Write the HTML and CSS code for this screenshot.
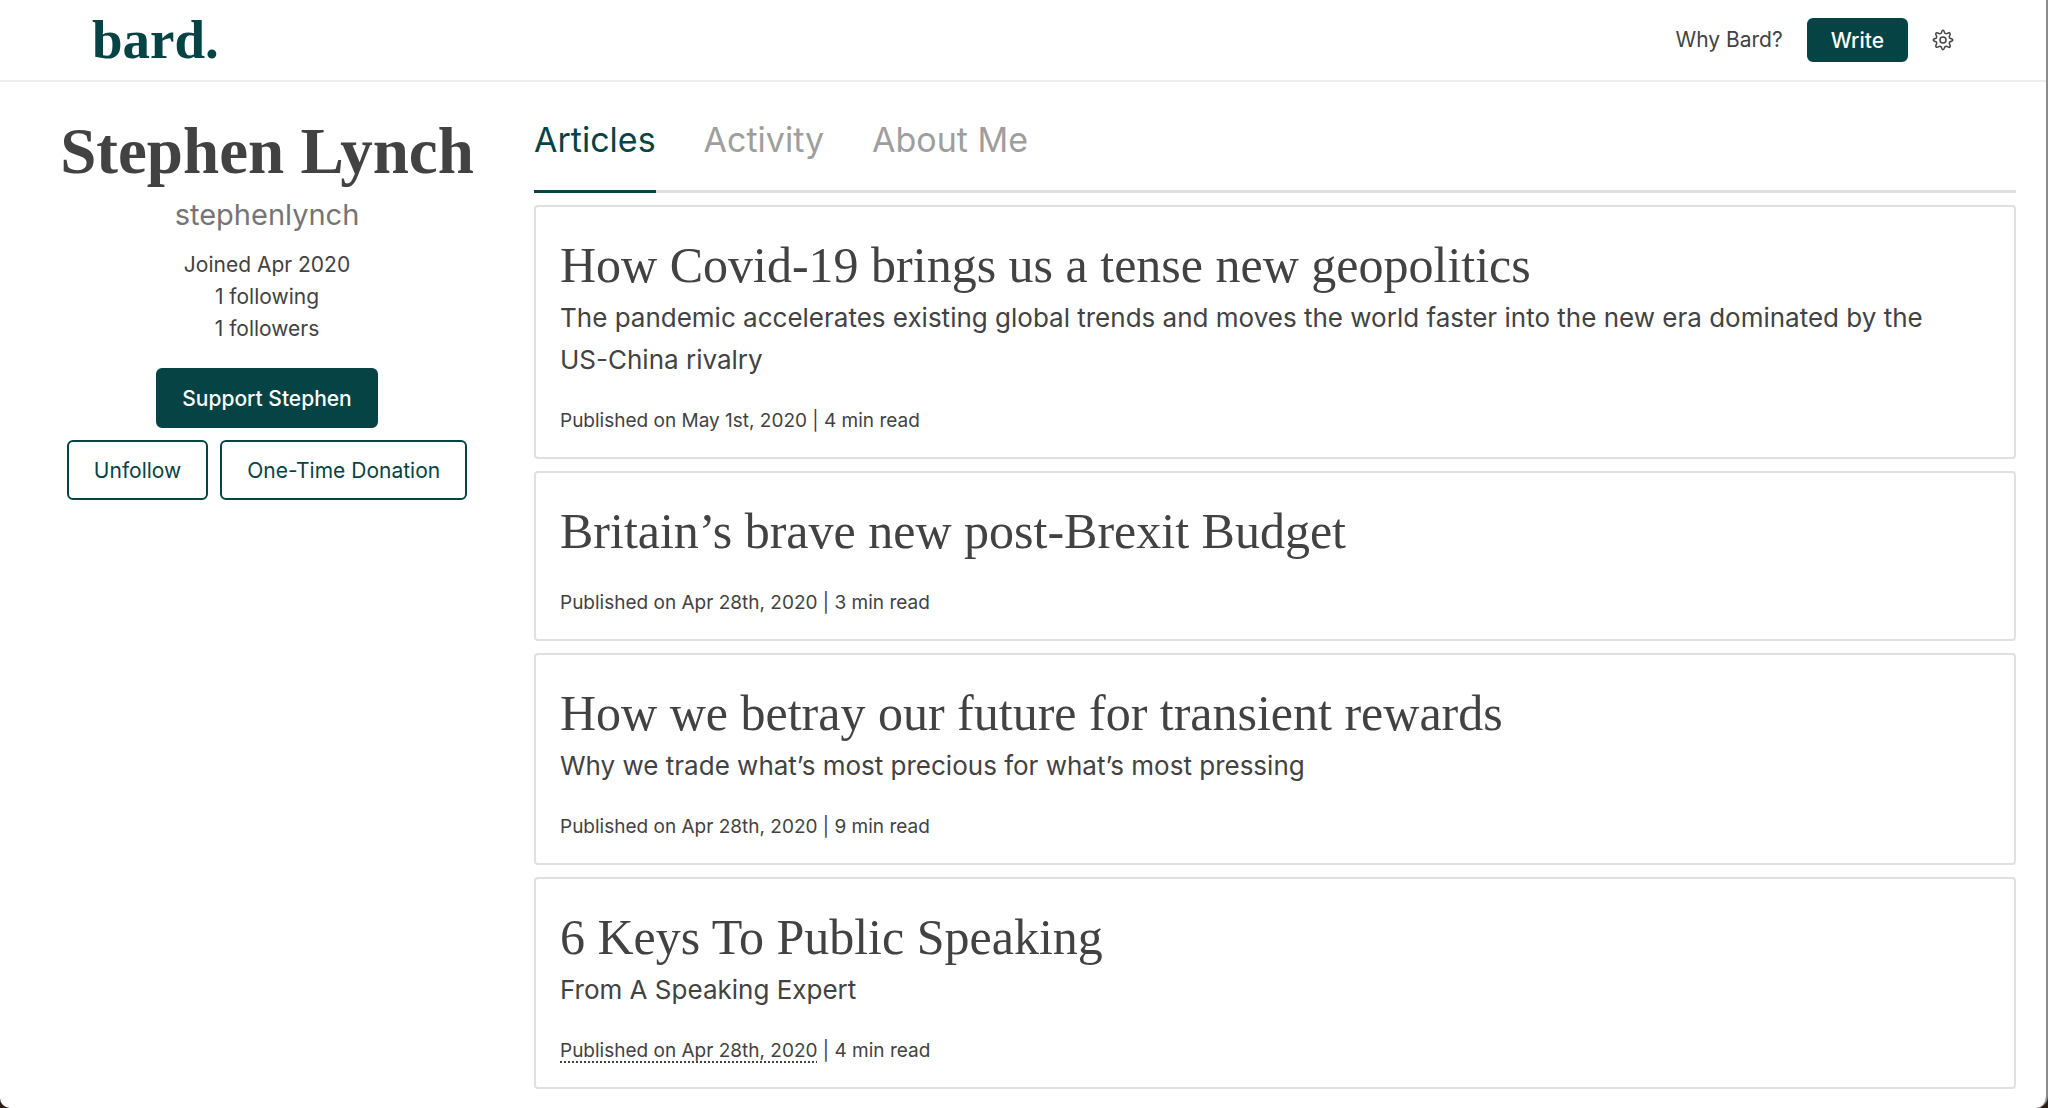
FILE: index.html
```html
<!DOCTYPE html>
<html lang="en">
<head>
	<meta charset="utf-8">
	<meta name="viewport" content="width=device-width, initial-scale=1">
	<title>Stephen Lynch - bard.</title>
	<link rel="stylesheet" href="styles.css">
</head>
<body>
	<header class="navbar">
		<a href="#" class="logo">bard.</a>
		<nav class="nav-links">
			<a href="#" class="nav-link">Why Bard?</a>
			<button type="button" class="btn btn-small">Write</button>
			<button type="button" class="settings" aria-label="Settings">
				<svg width="22" height="22" viewBox="0 0 22 22" fill="none" stroke="#424242" stroke-width="1.5" stroke-linejoin="round">
					<circle cx="11" cy="11" r="3"/>
					<path d="M9.5 3.4C9.9 2.1 10.1 1.2 11 1.2S12.1 2.1 12.5 3.4C12.9 4.6 14.1 5 15.2 4.4C16.4 3.7 17.2 3.3 17.9 4S18.3 5.6 17.6 6.8C17 7.9 17.4 9.1 18.6 9.5C19.9 9.9 20.8 10.1 20.8 11S19.9 12.1 18.6 12.5C17.4 12.9 17 14.1 17.6 15.2C18.3 16.4 18.7 17.2 18 17.9S16.4 18.3 15.2 17.6C14.1 17 12.9 17.4 12.5 18.6C12.1 19.9 11.9 20.8 11 20.8S9.9 19.9 9.5 18.6C9.1 17.4 7.9 17 6.8 17.6C5.6 18.3 4.8 18.7 4.1 18S3.7 16.4 4.4 15.2C5 14.1 4.6 12.9 3.4 12.5C2.1 12.1 1.2 11.9 1.2 11S2.1 9.9 3.4 9.5C4.6 9.1 5 7.9 4.4 6.8C3.7 5.6 3.3 4.8 4 4.1S5.6 3.7 6.8 4.4C7.9 5 9.1 4.6 9.5 3.4Z"/>
				</svg>
			</button>
		</nav>
	</header>
	<div class="page">
		<aside class="profile">
			<h1>Stephen Lynch</h1>
			<p class="username">stephenlynch</p>
			<p>Joined Apr 2020</p>
			<p>1 following</p>
			<p>1 followers</p>
			<div class="support">
				<button type="button" class="btn">Support Stephen</button>
			</div>
			<div class="actions">
				<button type="button" class="btn btn-outline">Unfollow</button>
				<button type="button" class="btn btn-outline">One-Time Donation</button>
			</div>
		</aside>
		<main>
			<nav class="tabs">
				<a href="#" class="active">Articles</a>
				<a href="#">Activity</a>
				<a href="#">About Me</a>
			</nav>
			<article class="card">
				<h2>How Covid-19 brings us a tense new geopolitics</h2>
				<p class="summary">The pandemic accelerates existing global trends and moves the world faster into the new era dominated by the <span class="nowrap">US-China</span> rivalry</p>
				<p class="meta"><span>Published on May 1st, 2020</span> | 4 min read</p>
			</article>
			<article class="card">
				<h2>Britain’s brave new post-Brexit Budget</h2>
				<p class="meta"><span>Published on Apr 28th, 2020</span> | 3 min read</p>
			</article>
			<article class="card">
				<h2>How we betray our future for transient rewards</h2>
				<p class="summary">Why we trade what’s most precious for what’s most pressing</p>
				<p class="meta"><span>Published on Apr 28th, 2020</span> | 9 min read</p>
			</article>
			<article class="card">
				<h2>6 Keys To Public Speaking</h2>
				<p class="summary">From A Speaking Expert</p>
				<p class="meta"><span class="edited">Published on Apr 28th, 2020</span> | 4 min read</p>
			</article>
		</main>
	</div>
</body>
</html>
```

FILE: styles.css
```css
*{
	box-sizing:border-box;
}
html{
	background:#2b1d18;
}
body{
	margin:0;
	min-height:100vh;
	background:#fff;
	border-right:2px solid #8c8c8c;
	border-radius:0 0 12px 10px;
	font-family:Inter, "Liberation Sans", sans-serif;
	font-size:21px;
	line-height:32px;
	color:#424242;
}
h1, h2, p{
	margin:0;
}
a{
	color:inherit;
	text-decoration:none;
}
.navbar{
	display:flex;
	justify-content:space-between;
	align-items:center;
	height:82px;
	padding:0 92px;
	border-bottom:2px solid #eee;
}
.logo{
	font-family:"Liberation Serif", serif;
	font-size:55px;
	font-weight:bold;
	color:#054345;
}
.nav-links{
	display:flex;
	align-items:center;
	gap:24px;
}
.btn{
	height:60px;
	padding:0 24px;
	border:2px solid #054345;
	border-radius:6px;
	background:#054345;
	color:#fff;
	font-family:inherit;
	font-size:21px;
	font-weight:500;
}
.btn-small{
	height:44px;
	padding:0 22px;
}
.btn-outline{
	padding:0 25px;
	background:#fff;
	color:#054345;
	font-weight:400;
}
.settings{
	display:flex;
	padding:0;
	border:0;
	background:none;
}
.page{
	display:grid;
	grid-template-columns:534px 1fr;
	padding-right:30px;
}
.profile{
	padding-top:35px;
	text-align:center;
}
.profile h1{
	font-family:"Liberation Serif", serif;
	font-size:65px;
	line-height:68px;
}
.username{
	margin:12px 0 16px;
	font-size:29px;
	line-height:36px;
	color:#757575;
}
.support{
	margin-top:23px;
}
.support .btn{
	display:block;
	margin:0 auto;
}
.actions{
	display:flex;
	justify-content:center;
	gap:12px;
	margin-top:12px;
}
.tabs{
	display:flex;
	gap:48px;
	border-bottom:3px solid #e0e0e0;
	margin-bottom:12px;
	font-size:34px;
	color:#9e9e9e;
}
.tabs a{
	padding:42px 0 34px;
	margin-bottom:-3px;
	border-bottom:3px solid transparent;
}
.tabs .active{
	color:#054345;
	border-color:#054345;
}
.card{
	padding:30px 24px 20px;
	margin-bottom:12px;
	border:2px solid #e0e0e0;
	border-radius:4px;
}
.card h2{
	padding-bottom:4px;
	font-family:"Liberation Serif", serif;
	font-size:50px;
	font-weight:normal;
	line-height:56px;
}
.summary{
	font-size:26px;
	line-height:42px;
}
.nowrap{
	white-space:nowrap;
}
.meta{
	margin-top:24px;
	font-size:19px;
}
.edited{
	text-decoration:underline dotted 2px;
	text-underline-offset:4px;
}
```
